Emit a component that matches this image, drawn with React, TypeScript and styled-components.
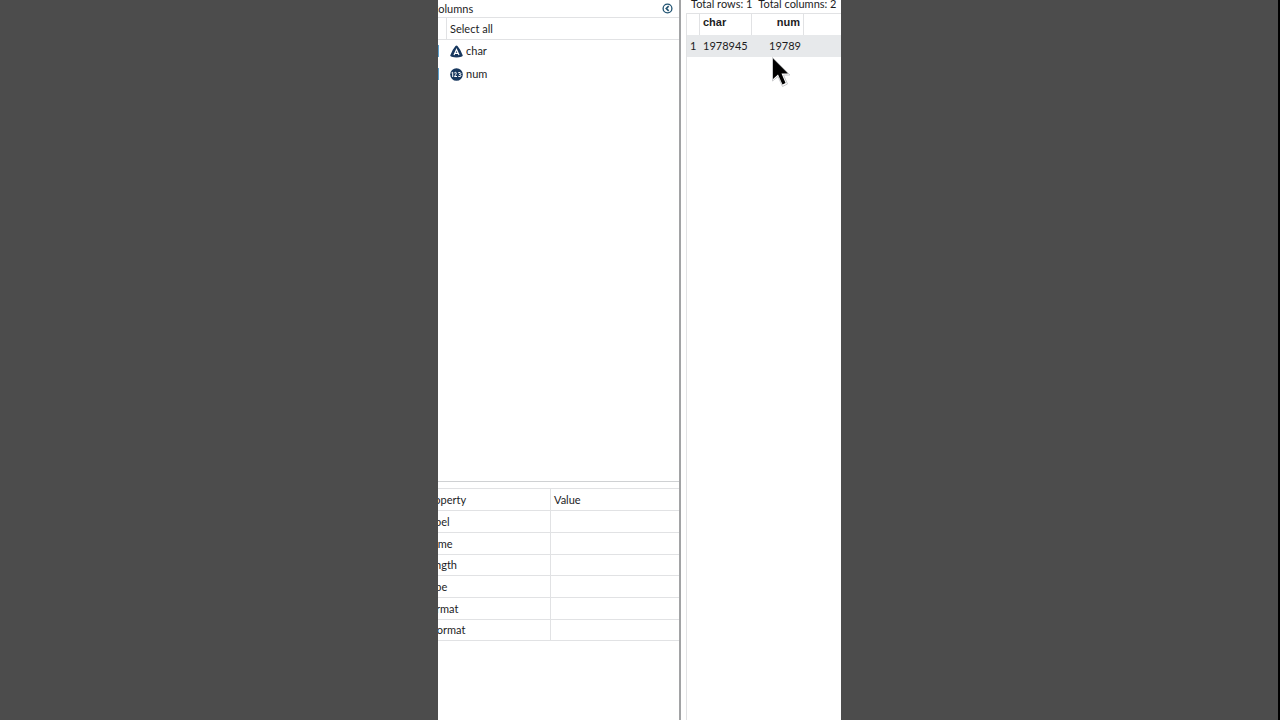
import React from "react";
import styled, { createGlobalStyle } from "styled-components";

const GlobalStyle = createGlobalStyle`
  *, *::before, *::after { box-sizing: border-box; }
  body {
    margin: 0;
    background: #4c4c4c;
    color: #1c1c1e;
    font-family: Lato, "Open Sans", sans-serif;
    font-size: 11px;
    line-height: 14px;
  }
`;

const line = "#e1e2e4";

const Stage = styled.main`
  display: grid;
  grid-template-columns: 1fr 403px 1fr;
  height: 100vh;
  padding-left: 1px;
  border-right: 2px solid #000;
  overflow: hidden;
`;

const Viewer = styled.div`
  grid-column: 2;
  display: flex;
  min-height: 0;
  background: #fff;
  overflow: hidden;
  white-space: nowrap;
`;

const Sidebar = styled.aside`
  flex: 0 0 257px;
  margin-left: -14px;
  display: flex;
  flex-direction: column;
  border-right: 2px solid #a2a3a5;
`;

const ColumnsPane = styled.section`
  flex: 1;
  min-height: 0;
`;

const PaneHeader = styled.header`
  display: flex;
  align-items: center;
  justify-content: space-between;
  height: 18px;
  padding: 0 6px 0 7px;
  border-bottom: 1px solid ${line};
`;

const PaneTitle = styled.h2`
  margin: 0;
  font-size: 11px;
  font-weight: 400;
`;

const CollapseButton = styled.button`
  display: flex;
  padding: 0;
  border: 0;
  background: none;
`;

const SelectAllRow = styled.div`
  display: flex;
  height: 22px;
  border-bottom: 1px solid ${line};
`;

const SelectAllLabel = styled.span`
  margin-left: 22px;
  padding: 4px 3px;
  border-left: 1px solid ${line};
`;

const ColumnList = styled.ul`
  margin: 0;
  padding: 0;
  list-style: none;
`;

const ColumnItem = styled.label`
  display: flex;
  align-items: center;
  height: 23px;
  padding: 0 0 1px 3px;
`;

const Check = styled.input`
  appearance: none;
  width: 12px;
  height: 12px;
  margin: 0 11px 0 0;
  border: 1px solid #5b9fcc;
  background: #6aaad4;
`;

const ColumnName = styled.span`
  margin-left: 3px;
`;

const PropertiesPane = styled.section`
  flex: 0 0 239px;
  padding-top: 6px;
  border-top: 1px solid #cfd1d3;
`;

const PropertyTable = styled.table`
  width: 100%;
  table-layout: fixed;
  border-collapse: separate;
  border-spacing: 0;
  border-top: 1px solid ${line};
`;

const PropertyCell = styled.td`
  height: 22px;
  padding: 0;
  text-align: left;
  font-weight: 400;
  border-bottom: 1px solid ${line};

  &:first-child {
    width: 127px;
    border-right: 1px solid ${line};
  }

  & + & {
    padding-left: 3px;
  }
`;

const PropertyRow = styled.tr<{ $compact?: boolean }>`
  ${PropertyCell} {
    height: ${(p) => (p.$compact ? 21 : 22)}px;
  }
`;

const DataPane = styled.section`
  flex: 1;
  min-width: 0;
  display: flex;
  flex-direction: column;
  padding-left: 5px;
`;

const Totals = styled.div`
  display: flex;
  gap: 6px;
  height: 13px;
  padding-left: 5px;
  line-height: 8px;
`;

const Grid = styled.div`
  flex: 1;
  border-left: 1px solid ${line};
`;

const DataTable = styled.table`
  width: 100%;
  table-layout: fixed;
  border-collapse: separate;
  border-spacing: 0;
  border-top: 1px solid ${line};
`;

const HeadCell = styled.th<{ $width?: number; $right?: boolean }>`
  width: ${(p) => (p.$width ? `${p.$width}px` : "auto")};
  height: 21px;
  padding: 0 3px 5px;
  font-family: "Liberation Sans", sans-serif;
  font-weight: 700;
  text-align: ${(p) => (p.$right ? "right" : "left")};
  border-right: ${(p) => (p.$width ? `1px solid ${line}` : "0")};
`;

const DataCell = styled.td<{ $right?: boolean }>`
  height: 22px;
  padding: 0 3px;
  text-align: ${(p) => (p.$right ? "right" : "left")};
  background: #e7e9eb;
`;

const Pointer = styled.svg`
  position: absolute;
  left: calc(50% + 131px);
  top: 56px;
`;

const CharIcon = () => (
  <svg width="13" height="13" viewBox="0 0 13 13" aria-hidden="true">
    <path d="M5.5 1Q6.5 -.2 7.5 1Q11 5 12.8 10.5Q12.6 11.4 11.3 11.8Q6.5 13 1.7 11.8Q.4 11.4 .2 10.5Q2 5 5.5 1Z" fill="#17375e" />
    <path d="M4 10 6.5 4.5 9 10M4.8 8.4H8.2" fill="none" stroke="#fff" strokeWidth="1.2" />
  </svg>
);

const NumIcon = () => (
  <svg width="13" height="13" viewBox="0 0 13 13" aria-hidden="true">
    <circle cx="6.5" cy="6.5" r="6.3" fill="#17375e" />
    <path
      d="M1.5 4.9 2.7 4.3V9M4.3 5Q5.2 3.8 6.2 4.7Q6.8 5.7 4.5 8.5H7M8.2 4.7Q10.6 3.9 10.9 5.3Q10.9 6.4 9.2 6.4Q11.2 6.5 11.1 7.7Q10.5 9.2 8.2 8.3"
      fill="none"
      stroke="#fff"
      strokeWidth="1"
    />
  </svg>
);

const properties = ["Label", "Name", "Length", "Type", "Format", "Informat"];
const compactRows = ["Length", "Informat"];

export default function App() {
  return (
    <>
      <GlobalStyle />
      <Stage>
        <Viewer>
          <Sidebar>
            <ColumnsPane>
              <PaneHeader>
                <PaneTitle>Columns</PaneTitle>
                <CollapseButton type="button" aria-label="Collapse columns">
                  <svg width="11" height="11" viewBox="0 0 11 11" aria-hidden="true">
                    <circle cx="5.5" cy="5.5" r="4.4" fill="none" stroke="#1f5271" strokeWidth="1.3" />
                    <path d="M6.7 3.2 4.3 5.5 6.7 7.8" fill="none" stroke="#1f5271" strokeWidth="1.6" />
                  </svg>
                </CollapseButton>
              </PaneHeader>
              <SelectAllRow>
                <SelectAllLabel>Select all</SelectAllLabel>
              </SelectAllRow>
              <ColumnList>
                <li>
                  <ColumnItem>
                    <Check type="checkbox" defaultChecked />
                    <CharIcon />
                    <ColumnName>char</ColumnName>
                  </ColumnItem>
                </li>
                <li>
                  <ColumnItem>
                    <Check type="checkbox" defaultChecked />
                    <NumIcon />
                    <ColumnName>num</ColumnName>
                  </ColumnItem>
                </li>
              </ColumnList>
            </ColumnsPane>
            <PropertiesPane>
              <PropertyTable>
                <thead>
                  <PropertyRow>
                    <PropertyCell as="th">Property</PropertyCell>
                    <PropertyCell as="th">Value</PropertyCell>
                  </PropertyRow>
                </thead>
                <tbody>
                  {properties.map((name) => (
                    <PropertyRow key={name} $compact={compactRows.includes(name)}>
                      <PropertyCell>{name}</PropertyCell>
                      <PropertyCell />
                    </PropertyRow>
                  ))}
                </tbody>
              </PropertyTable>
            </PropertiesPane>
          </Sidebar>
          <DataPane>
            <Totals>
              <span>Total rows: 1</span>
              <span>Total columns: 2</span>
            </Totals>
            <Grid>
              <DataTable>
                <thead>
                  <tr>
                    <HeadCell $width={13} />
                    <HeadCell $width={52}>char</HeadCell>
                    <HeadCell $width={52} $right>
                      num
                    </HeadCell>
                    <HeadCell />
                  </tr>
                </thead>
                <tbody>
                  <tr>
                    <DataCell>1</DataCell>
                    <DataCell>1978945</DataCell>
                    <DataCell $right>19789</DataCell>
                    <DataCell />
                  </tr>
                </tbody>
              </DataTable>
            </Grid>
          </DataPane>
        </Viewer>
      </Stage>
      <Pointer width="20" height="32" viewBox="0 0 20 32" aria-hidden="true">
        <path
          d="M1.5 1.5V25L7 20.5 11.5 30.5 16.5 28 12.5 19H19Z"
          fill="#fff"
          stroke="#c9cacc"
          strokeWidth="1"
          strokeLinejoin="round"
        />
        <path d="M2 2.5V23L7 18.5 11.5 28.5 14.5 27 10.5 17.5H17Z" fill="#000" />
      </Pointer>
    </>
  );
}
